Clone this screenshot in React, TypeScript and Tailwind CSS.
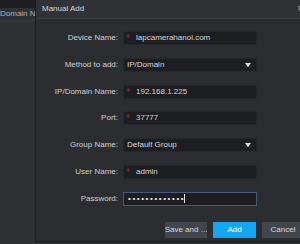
import React from "react";

const font = { fontFamily: '"Liberation Sans", Arial, sans-serif' };

function Star() {
  return <span className="text-[#a8222c] text-[10px] leading-none w-[12px] pl-[2px] shrink-0 pt-[2px]">*</span>;
}

function Caret() {
  return (
    <svg width="6" height="4" viewBox="0 0 6 4" className="shrink-0">
      <path d="M0 0 L6 0 L3 4 Z" fill="#e6e6e6" />
    </svg>
  );
}

function Row({ label, children }: { label: string; children: React.ReactNode }) {
  return (
    <div className="flex items-center h-[14px]">
      <div className="w-[82px] text-right text-[8px] text-[#cdd0d4] leading-none whitespace-nowrap">{label}</div>
      <div className="ml-[5px] w-[134px] h-[14px] bg-[#1d1e22] border border-[#26282c] flex items-center text-[8px] text-[#d4d5d8] leading-none whitespace-nowrap">
        {children}
      </div>
    </div>
  );
}

export default function App() {
  return (
    <div style={font} className="w-[300px] h-[244px] overflow-hidden flex bg-[#2c2e32]">
      <div className="w-[35px] shrink-0 flex flex-col bg-[#2e3034]">
        <div className="h-[8px] bg-[#1e1f23]" />
        <div className="h-[13px] flex items-center text-[8px] text-[#aeb2ba] whitespace-nowrap overflow-hidden leading-none border-b border-[#3a3c41]">
          Domain Na
        </div>
      </div>
      <div className="w-[278px] shrink-0 h-[242px] flex flex-col border-l border-[#1a1b1e] border-b bg-[#2b2d31]">
        <div className="h-[19px] flex items-center justify-between pl-[6px] pr-[6px] bg-[#303236] border-b border-[#3a3c41]">
          <span className="text-[8px] text-[#d6d7da] leading-none">Manual Add</span>
          <span className="text-[8px] text-[#bfc1c5] leading-none mr-[3px]">✕</span>
        </div>
        <div className="flex flex-col gap-[12.8px] pt-[12px]">
          <Row label="Device Name:">
            <Star />
            <span>lapcamerahanoi.com</span>
          </Row>
          <Row label="Method to add:">
            <span className="pl-[3px] flex-1">IP/Domain</span>
            <span className="mr-[5px]"><Caret /></span>
          </Row>
          <Row label="IP/Domain Name:">
            <Star />
            <span>192.168.1.225</span>
          </Row>
          <Row label="Port:">
            <Star />
            <span>37777</span>
          </Row>
          <Row label="Group Name:">
            <span className="pl-[3px] flex-1">Default Group</span>
            <span className="mr-[5px]"><Caret /></span>
          </Row>
          <Row label="User Name:">
            <Star />
            <span>admin</span>
          </Row>
          <div className="flex items-center h-[14px]">
            <div className="w-[82px] text-right text-[8px] text-[#cdd0d4] leading-none">Password:</div>
            <div className="ml-[5px] w-[134px] h-[14px] bg-[#1d1e22] border border-[#46597a] flex items-center text-[8px] text-[#e4e5e8] leading-none">
              <span className="pl-[4px] tracking-[1.6px]">•••••••••••••</span>
              <span className="w-px h-[9px] bg-[#e4e5e8] -ml-[1px]" />
            </div>
          </div>
        </div>
        <div className="flex mt-[16px] ml-[129px] gap-[6px]">
          <div className="w-[42px] h-[16px] bg-[#41454c] flex items-center justify-center text-[8px] text-[#d8d9dc] leading-none whitespace-nowrap">Save and ...</div>
          <div className="w-[43px] h-[16px] bg-[#14a6f2] flex items-center justify-center text-[8px] text-white leading-none whitespace-nowrap">Add</div>
          <div className="w-[42px] h-[16px] bg-[#41454c] flex items-center justify-center text-[8px] text-[#d8d9dc] leading-none whitespace-nowrap">Cancel</div>
        </div>
      </div>
    </div>
  );
}
